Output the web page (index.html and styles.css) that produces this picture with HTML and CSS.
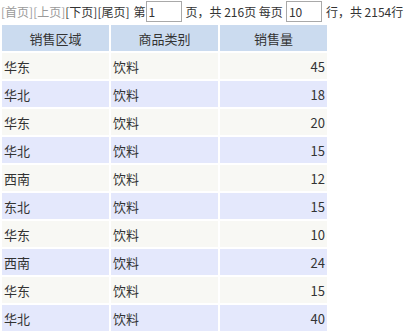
FILE: index.html
```html
<!DOCTYPE html>
<html>
<head>
<meta charset="utf-8">
<link rel="stylesheet" href="styles.css">
</head>
<body>
<div class="pager">
  <span class="off">[首页]</span><span class="off">[上页]</span><span class="on">[下页]</span><span class="on">[尾页]</span>
  <span class="lbl first">第</span><input class="box" type="text" value="1"><span class="lbl">页，共 216页 每页</span><input class="box box2" type="text" value="10"><span class="lbl">行，共 2154行</span>
</div>
<table class="grid">
  <thead>
    <tr><th>销售区域</th><th>商品类别</th><th>销售量</th></tr>
  </thead>
  <tbody>
    <tr class="odd"><td>华东</td><td>饮料</td><td class="num">45</td></tr>
    <tr class="even"><td>华北</td><td>饮料</td><td class="num">18</td></tr>
    <tr class="odd"><td>华东</td><td>饮料</td><td class="num">20</td></tr>
    <tr class="even"><td>华北</td><td>饮料</td><td class="num">15</td></tr>
    <tr class="odd"><td>西南</td><td>饮料</td><td class="num">12</td></tr>
    <tr class="even"><td>东北</td><td>饮料</td><td class="num">15</td></tr>
    <tr class="odd"><td>华东</td><td>饮料</td><td class="num">10</td></tr>
    <tr class="even"><td>西南</td><td>饮料</td><td class="num">24</td></tr>
    <tr class="odd"><td>华东</td><td>饮料</td><td class="num">15</td></tr>
    <tr class="even"><td>华北</td><td>饮料</td><td class="num">40</td></tr>
  </tbody>
</table>
</body>
</html>
```
FILE: styles.css
```css
html, body {
  margin: 0;
  padding: 0;
  background: #ffffff;
  font-family: "Noto Sans CJK SC", "Noto Sans", sans-serif;
  font-size: 12px;
  color: #333333;
}
.pager {
  display: flex;
  align-items: center;
  height: 23px;
  padding-left: 1px;
  white-space: nowrap;
}
.off { color: #9a9a9a; }
.on { color: #333333; }
.lbl { margin-left: 2px; }
.lbl.first { margin-left: 4px; }
.box {
  box-sizing: border-box;
  width: 36px;
  height: 21px;
  margin: 0 2px 0 0;
  padding: 0 2px;
  border: 1px solid #a9a9a9;
  font-family: "Noto Sans CJK SC", "Noto Sans", sans-serif;
  font-size: 12px;
  color: #333333;
  background: #ffffff;
  outline: none;
}
.box2 { margin-left: 3px; }
.grid {
  border-collapse: separate;
  border-spacing: 2px;
  margin-top: 0;
  margin-left: 0;
}
.grid th, .grid td {
  box-sizing: border-box;
  width: 107px;
  height: 26px;
  padding: 0 2px;
  font-weight: normal;
  font-size: 13px;
  color: #333333;
}
.grid th {
  background: #cbdbef;
  text-align: center;
}
.grid td { text-align: left; }
.grid td.num { text-align: right; }
.odd td { background: #f8f8f4; }
.even td { background: #e4e8fc; }
```
